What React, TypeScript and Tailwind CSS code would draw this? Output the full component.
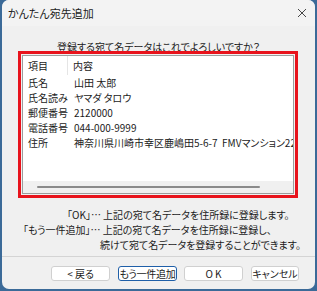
const rows: [string, string][] = [
  ["氏名", "山田 太郎"],
  ["氏名読み", "ヤマダ タロウ"],
  ["郵便番号", "2120000"],
  ["電話番号", "044-000-9999"],
  ["住所", "神奈川県川崎市幸区鹿嶋田5-6-7\u00a0\u00a0FMVマンション222"],
];

const buttons = [
  { label: "< 戻る", cls: "ml-[49px] w-[59px]", focus: false },
  { label: "もう一件追加", cls: "ml-[8px] w-[59px]", focus: true },
  { label: "O K", cls: "ml-[7px] w-[59px]", focus: false },
  { label: "キャンセル", cls: "ml-[8px] w-[48px]", focus: false },
];

const App = () => {
  return (
    <div className="w-[317px] h-[291px] bg-[#3b6a98] overflow-hidden font-['Noto_Sans_CJK_JP','Liberation_Sans',sans-serif] [font-feature-settings:'palt'] text-[#1b1b1b]">
      <div className="ml-[2px] w-[313px] h-[289px] rounded-[7px] bg-[#f0f0f0] flex flex-col overflow-hidden">
        {/* title bar */}
        <div className="h-[26px] bg-[#f3f3f3] flex items-center justify-between pl-[6px] pr-[8px]">
          <span className="text-[11px] leading-none">かんたん宛先追加</span>
          <svg width="10" height="10" viewBox="0 0 10 10">
            <path d="M1 1L9 9M9 1L1 9" stroke="#333" strokeWidth="0.9" />
          </svg>
        </div>

        <div className="mt-[15px] h-[10px] text-center text-[10px] leading-[12px]">
          登録する宛て名データはこれでよろしいですか？
        </div>

        {/* highlighted list */}
        <div className="ml-[16px] w-[280px] h-[147px] border-[3px] border-[#e8131c] p-[1px] flex">
          <div className="flex-1 border border-[#9c9c9c] bg-white flex flex-col overflow-hidden text-[10px]">
            <div className="h-[19px] flex items-center">
              <div className="w-[45px] h-full pl-[5px] flex items-center border-r border-[#e5e5e5]">
                項目
              </div>
              <div className="pl-[5px]">内容</div>
            </div>
            {rows.map(([k, v]) => (
              <div key={k} className="h-[15px] flex items-center whitespace-nowrap">
                <div className="w-[51px] shrink-0 pl-[5px]">{k}</div>
                <div>{v}</div>
              </div>
            ))}
            <div className="flex-1" />
            <div className="h-[12px] bg-[#f0f0f0] flex items-center">
              <div className="ml-[14px] w-[223px] h-[2px] rounded-full bg-[#8a8a8a]" />
            </div>
          </div>
        </div>

        <div className="mt-[9px] text-[10px] leading-[15px] whitespace-nowrap">
          <div className="pl-[65px]">「OK」… 上記の宛て名データを住所録に登録します。</div>
          <div className="pl-[21px]">「もう一件追加」… 上記の宛て名データを住所録に登録し、</div>
          <div className="pl-[98px]">続けて宛て名データを登録することができます。</div>
        </div>

        <div className="mt-[4px] border-t border-[#d4d4d4] pt-[9px] flex">
          {buttons.map((b) => (
            <div
              key={b.label}
              className={`${b.cls} h-[15px] rounded-[3px] bg-white flex items-center justify-center whitespace-nowrap text-[10px] leading-none ${
                b.focus ? "border-[1.5px] border-[#1f5fa8] tracking-[-0.3px]" : "border border-[#d0d0d0]"
              }`}
            >
              {b.label}
            </div>
          ))}
        </div>
      </div>
    </div>
  );
};

export default App;
